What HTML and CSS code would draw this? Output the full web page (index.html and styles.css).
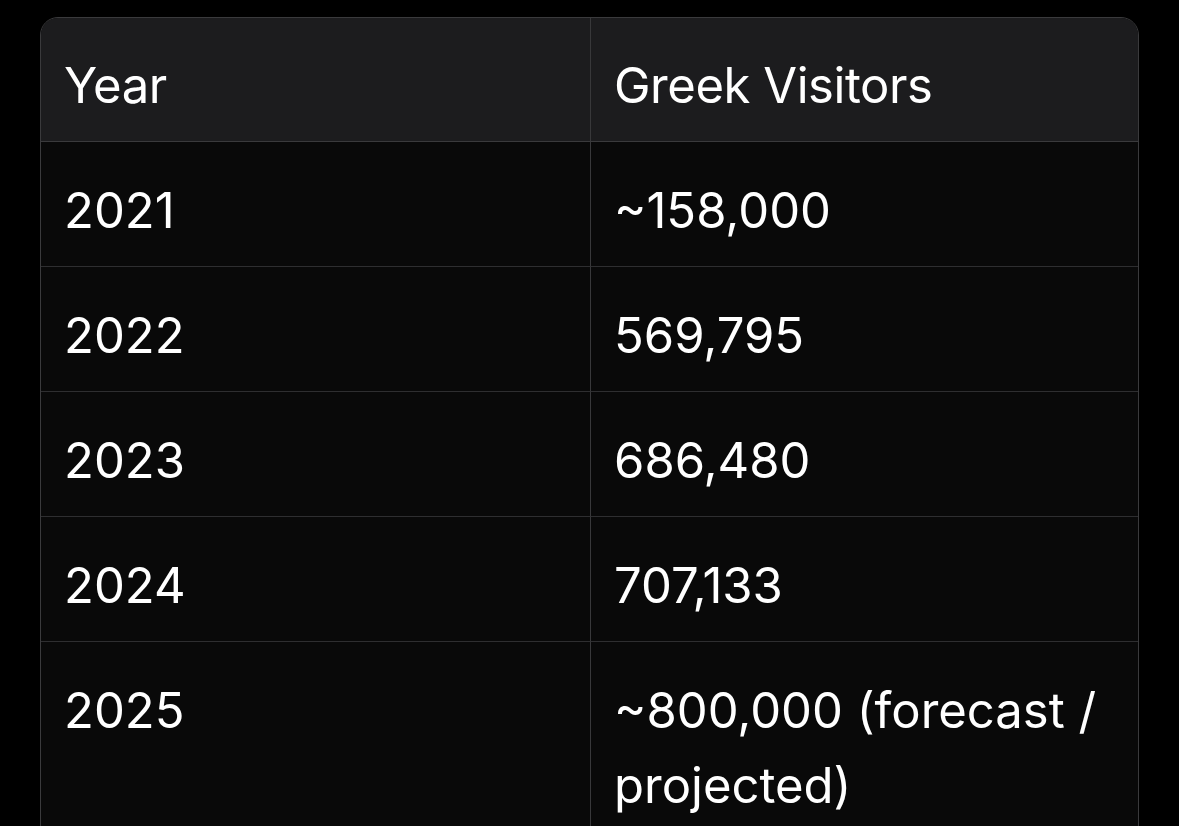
FILE: index.html
```html
<!DOCTYPE html>
<html lang="en">
<head>
<meta charset="utf-8">
<title>Greek Visitors</title>
<link rel="stylesheet" href="styles.css">
</head>
<body>
<div class="table-wrap">
  <table class="data-table">
    <thead>
      <tr><th>Year</th><th>Greek Visitors</th></tr>
    </thead>
    <tbody>
      <tr><td>2021</td><td>~158,000</td></tr>
      <tr><td>2022</td><td>569,795</td></tr>
      <tr><td>2023</td><td>686,480</td></tr>
      <tr><td>2024</td><td>707,133</td></tr>
      <tr><td>2025</td><td>~800,000 (forecast / projected)</td></tr>
    </tbody>
  </table>
</div>
</body>
</html>
```
FILE: styles.css
```css
html, body {
  margin: 0;
  background: #000;
}
body {
  padding: 17px 40px 0 40px;
  font-family: Inter, "Noto Sans", "Liberation Sans", sans-serif;
  color: #fff;
}
.table-wrap {
  width: 1097px;
  border: 1px solid #3a3a3c;
  border-radius: 18px;
  overflow: hidden;
  background: #090909;
}
.data-table {
  width: 100%;
  border-collapse: separate;
  border-spacing: 0;
  table-layout: fixed;
}
.data-table th,
.data-table td {
  text-align: left;
  font-weight: 400;
  font-size: 49px;
  line-height: 75px;
  padding: 30px 23px 18px 23px;
  vertical-align: top;
  border-bottom: 1px solid #2e2e30;
}
.data-table th {
  letter-spacing: -0.45px;
}
.data-table td {
  letter-spacing: 0;
  padding-top: 31px;
}
.data-table th:first-child,
.data-table td:first-child {
  width: 503px;
  border-right: 1px solid #38383a;
}
.data-table thead th {
  background: #1c1c1e;
  border-bottom-color: #3a3a3c;
}
```
